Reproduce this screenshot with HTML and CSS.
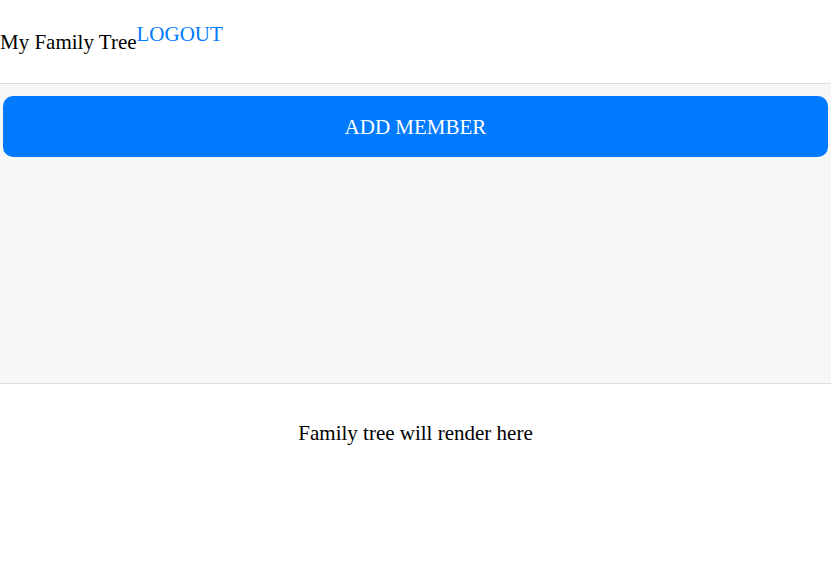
FILE: index.html
```html
<!DOCTYPE html>
<html>
<head>
<meta charset="utf-8">
<link rel="stylesheet" href="styles.css">
</head>
<body>
<header class="header">
  <span class="title">My Family Tree</span>
  <span class="logout">LOGOUT</span>
</header>
<section class="panel">
  <div class="add-btn">ADD MEMBER</div>
</section>
<main class="tree">
  <p class="placeholder">Family tree will render here</p>
</main>
</body>
</html>
```
FILE: styles.css
```css
html, body {
  margin: 0;
  padding: 0;
  background: #fff;
  font-family: "Liberation Serif", "Times New Roman", serif;
  font-size: 21px;
  line-height: 24px;
  color: #000;
}
.header {
  display: flex;
  align-items: flex-start;
  height: 83px;
  border-bottom: 1px solid #dddddd;
  box-sizing: content-box;
}
.title {
  margin-top: 30px;
}
.logout {
  margin-top: 22px;
  color: #007aff;
}
.panel {
  background: #f7f7f7;
  border-bottom: 1px solid #dddddd;
  padding: 12px 3px 0;
  box-sizing: border-box;
  height: 300px;
}
.add-btn {
  height: 61px;
  background: #007aff;
  border-radius: 10px;
  color: #fff;
  display: flex;
  align-items: center;
  justify-content: center;
}
.tree {
  padding-top: 37px;
}
.placeholder {
  margin: 0;
  text-align: center;
}
```
